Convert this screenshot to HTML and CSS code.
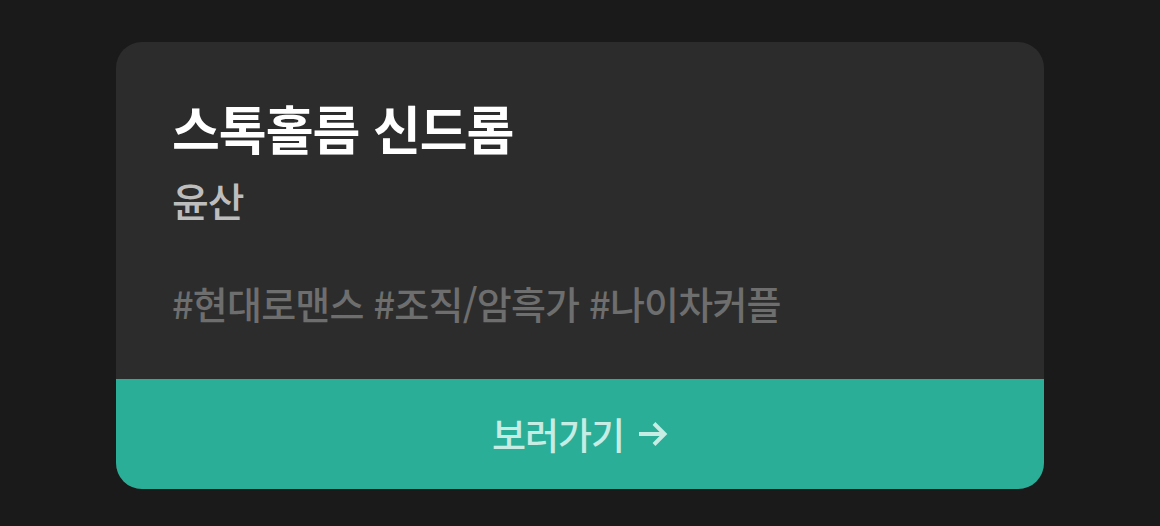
FILE: index.html
```html
<!DOCTYPE html>
<html lang="ko">
<head>
    <meta charset="UTF-8">
    <title>스톡홀름 신드롬</title>
    <link rel="stylesheet" href="styles.css">
</head>
<body>
<div class="card">
    <div class="info">
        <h2 class="title">스톡홀름 신드롬</h2>
        <p class="author">윤산</p>
        <p class="tags">#현대로맨스 #조직/암흑가 #나이차커플</p>
    </div>
    <a class="go" href="#">보러가기
        <svg class="arrow" width="30" height="26" viewBox="0 0 30 26"><path d="M1 13h26M16 2.5l10.5 10.5-10.5 10.5" fill="none" stroke="currentColor" stroke-width="4"/></svg>
    </a>
</div>
</body>
</html>
```

FILE: styles.css
```css
body { margin: 0; background-color: #1a1a1a; font-family: "Noto Sans CJK KR", "Noto Sans", sans-serif; }
.card { width: 928px; margin: 42px auto 0; background-color: #2c2c2c; border-radius: 26px; overflow: hidden; }
.info { height: 337px; padding: 52px 56px 0; box-sizing: border-box; }
.title { margin: 0; font-size: 52px; font-weight: 700; line-height: 68px; color: #fff; letter-spacing: -1px; }
.author { margin: 14px 0 0; font-size: 40px; font-weight: 500; line-height: 48px; color: #bdbdbd; letter-spacing: -1px; }
.tags { margin: 55px 0 0; font-size: 38px; font-weight: 500; line-height: 48px; color: #6e6e6e; letter-spacing: -0.8px; }
.go { display: flex; align-items: center; justify-content: center; gap: 14px; height: 110px; background-color: #2bae97; color: #c6ece3; font-size: 37px; font-weight: 500; text-decoration: none; letter-spacing: -1px; }
.arrow { display: block; }
```
